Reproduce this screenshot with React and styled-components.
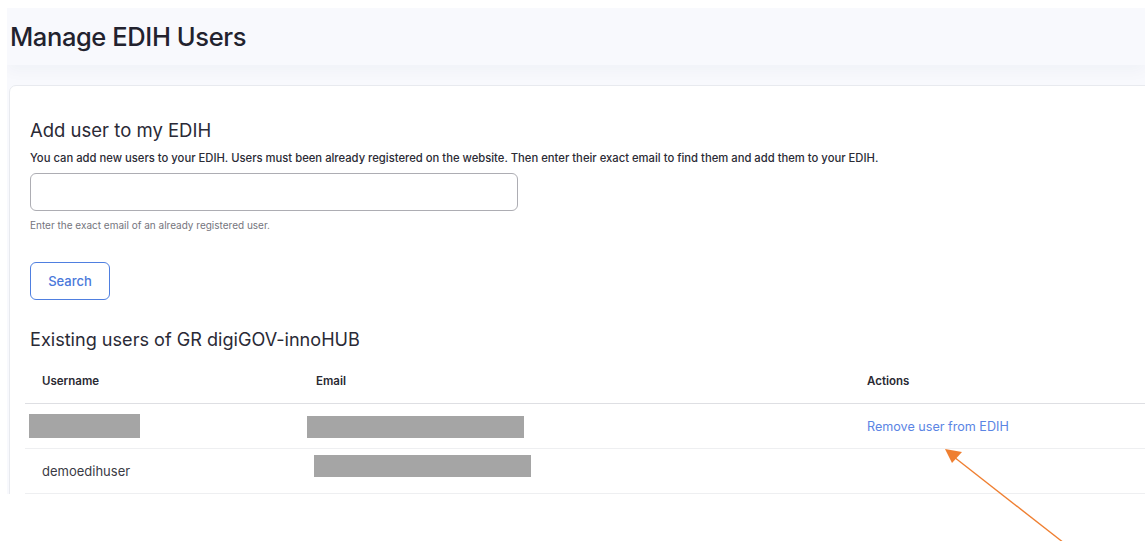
import React from 'react'
import styled, { createGlobalStyle } from 'styled-components'

const GlobalStyle = createGlobalStyle`
    html, body {
        margin: 0;
        padding: 0;
        background: #ffffff;
        font-family: Inter, "Noto Sans", "Liberation Sans", sans-serif;
        color: #23232f;
    }
`

// grey blocks hide personal data: [offset from column start, width, top, height]
const users = [
    { username: null, canRemove: true, nameMask: [4, 111, 10, 24], mailMask: [8, 217, 12, 22] },
    { username: 'demoedihuser', canRemove: false, mailMask: [15, 217, 6, 22] },
]

const App = () => {
    return (
        <>
            <GlobalStyle />
            <Page>
                <Header>
                    <Title>Manage EDIH Users</Title>
                </Header>
                <Card>
                    <Section>
                        <SectionTitle>Add user to my EDIH</SectionTitle>
                        <Lead>
                            You can add new users to your EDIH. Users must been already registered on the website. Then enter their exact email to find them and add them to your EDIH.
                        </Lead>
                        <EmailInput type="text" />
                        <Help>Enter the exact email of an already registered user.</Help>
                        <SearchButton>Search</SearchButton>
                    </Section>
                    <SectionTitle $top>Existing users of GR digiGOV-innoHUB</SectionTitle>
                    <Table>
                        <HeadRow>
                            <HeadCell>Username</HeadCell>
                            <HeadCell>Email</HeadCell>
                            <HeadCell>Actions</HeadCell>
                        </HeadRow>
                        {users.map((u, i) => (
                            <Row key={i}>
                                <Cell>
                                    {u.username}
                                    {u.nameMask && <Mask $box={u.nameMask} />}
                                </Cell>
                                <Cell>
                                    {u.mailMask && <Mask $box={u.mailMask} />}
                                </Cell>
                                <Cell>
                                    {u.canRemove && <ActionLink href="#">Remove user from EDIH</ActionLink>}
                                </Cell>
                            </Row>
                        ))}
                    </Table>
                </Card>
            </Page>
            <Pointer width="130" height="100" viewBox="0 0 130 100">
                <line x1="122" y1="96" x2="12" y2="10" stroke="#ef7f31" strokeWidth="1.4" />
                <polygon points="3,2 20,5 10,16" fill="#ef7f31" />
            </Pointer>
        </>
    )
}

const Page = styled.div`
    margin: 8px 0 0 7px;
    height: 486px;
    background: #f8f9fd;
    overflow: hidden;
`

const Header = styled.div`
    height: 57px;
    padding-left: 3px;
    box-sizing: border-box;
    background: #f8f9fd;
    box-shadow: 0 6px 14px rgba(40, 50, 90, 0.035);
    position: relative;
`

const Title = styled.h1`
    margin: 0;
    padding-top: 13px;
    font-size: 25.5px;
    font-weight: 500;
    letter-spacing: -0.4px;
    color: #22222e;
`

const Card = styled.div`
    margin: 20px 0 0 2px;
    width: 1200px;
    height: 460px;
    background: #ffffff;
    border: 1px solid #e8eaef;
    border-radius: 7px 0 0 0;
    padding: 21px 0 0 20px;
    box-sizing: border-box;
`

const Section = styled.div`
    display: flex;
    flex-direction: column;
    align-items: flex-start;
`

const SectionTitle = styled.h2`
    margin: ${p => (p.$top ? '16px' : '0')} 0 0 0;
    font-size: ${p => (p.$top ? '18.1px' : '18.5px')};
    font-weight: 400;
    line-height: 47px;
    color: #2a2a36;
`

const Lead = styled.p`
    margin: -3px 0 0 0;
    font-size: 11.25px;
    font-weight: 500;
    line-height: 14px;
    color: #2b2b35;
`

const EmailInput = styled.input`
    margin-top: 8px;
    width: 488px;
    height: 38px;
    box-sizing: border-box;
    border: 1px solid #adadb3;
    border-radius: 6px;
    outline: none;
`

const Help = styled.span`
    margin-top: 8px;
    font-size: 10px;
    color: #75757d;
`

const SearchButton = styled.button`
    margin-top: 31px;
    width: 80px;
    height: 38px;
    border: 1.5px solid #4f7fe0;
    border-radius: 6px;
    background: #ffffff;
    color: #4a78da;
    font-family: inherit;
    font-size: 13px;
    font-weight: 500;
`

const Table = styled.div`
    margin-left: -5px;
    margin-top: -4px;
`

const HeadRow = styled.div`
    display: grid;
    grid-template-columns: 274px 551px 1fr;
    height: 44px;
    align-items: center;
    border-bottom: 1.5px solid #dedfe3;
`

const Row = styled(HeadRow)`
    border-bottom: 1.5px solid #eeeff1;
`

const HeadCell = styled.div`
    padding-left: 17px;
    font-size: 11.5px;
    font-weight: 600;
    color: #2a2a33;
`

const Cell = styled.div`
    position: relative;
    height: 100%;
    display: flex;
    align-items: center;
    padding-left: 17px;
    font-size: 13px;
    color: #3a3a44;
`

const Mask = styled.span`
    position: absolute;
    left: ${p => p.$box[0]}px;
    top: ${p => p.$box[2]}px;
    width: ${p => p.$box[1]}px;
    height: ${p => p.$box[3]}px;
    background: #a5a5a5;
`

const ActionLink = styled.a`
    color: #5b85e4;
    font-size: 12.6px;
    text-decoration: none;
`

const Pointer = styled.svg`
    position: absolute;
    left: 942px;
    top: 447px;
`

export default App
